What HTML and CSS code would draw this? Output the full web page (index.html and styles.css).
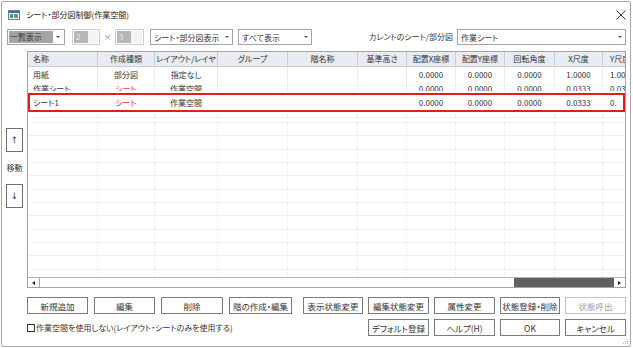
FILE: index.html
```html
<!DOCTYPE html>
<html lang="ja">
<head>
    <meta charset="UTF-8">
    <title>シート・部分図制御(作業空間)</title>
    <link rel="stylesheet" href="styles.css">
</head>
<body>
    <div class="window">
        <div class="titlebar">
            <svg class="app-icon" width="12" height="10" viewBox="0 0 12 10">
                <rect x="0.5" y="0.5" width="11" height="9" fill="#fff" stroke="#6d7b8c"/>
                <rect x="1" y="1" width="10" height="2" fill="#4a6a8e"/>
                <rect x="2" y="4" width="3" height="4" fill="#3aa55a"/>
                <rect x="6" y="4" width="4" height="4" fill="#5b8fd0"/>
            </svg>
            <span class="title">シート・部分図制御(作業空間)</span>
            <svg class="close" width="10" height="10" viewBox="0 0 10 10">
                <path d="M0.5 0.5 L9.5 9.5 M9.5 0.5 L0.5 9.5" stroke="#333" stroke-width="1"/>
            </svg>
        </div>

        <div class="toolbar">
            <div class="combo view-mode"><span class="sel">一覧表示</span><span class="arrow"></span></div>
            <div class="spin"><span class="num">2</span><span class="spin-btns"><i>˄</i><i>˅</i></span></div>
            <span class="times">×</span>
            <div class="spin wide"><span class="num">3</span><span class="spin-btns"><i>˄</i><i>˅</i></span></div>
            <div class="combo sheet-view"><span class="text">シート・部分図表示</span><span class="arrow"></span></div>
            <div class="combo all-view"><span class="text">すべて表示</span><span class="arrow"></span></div>
            <span class="spacer"></span>
            <span class="current-label">カレントのシート/部分図</span>
            <div class="combo current-sheet"><span class="text">作業シート</span><span class="arrow"></span></div>
        </div>

        <div class="main">
            <div class="mover">
                <button class="move-btn">↑</button>
                <span class="move-label">移動</span>
                <button class="move-btn">↓</button>
            </div>

            <div class="grid">
                <div class="row head">
                    <span>名称</span><span>作成種類</span><span>レイアウト/レイヤ</span><span>グループ</span><span>階名称</span><span>基準高さ</span><span>配置X座標</span><span>配置Y座標</span><span>回転角度</span><span>X尺度</span><span>Y尺度</span>
                </div>
                <div class="body">
                    <div class="row data first">
                        <span>用紙</span><span>部分図</span><span>指定なし</span><span></span><span></span><span></span><span>0.0000</span><span>0.0000</span><span>0.0000</span><span>1.0000</span><span>1.0000</span>
                    </div>
                    <div class="row data clipped">
                        <span>作業シート</span><span class="red">シート</span><span>作業空間</span><span></span><span></span><span></span><span>0.0000</span><span>0.0000</span><span>0.0000</span><span>0.0333</span><span>0.0333</span>
                    </div>
                    <div class="row data selected">
                        <span>シート1</span><span class="red">シート</span><span>作業空間</span><span></span><span></span><span></span><span>0.0000</span><span>0.0000</span><span>0.0000</span><span>0.0333</span><span>0.0333</span>
                    </div>
                    <div class="row blank thin"><span></span><span></span><span></span><span></span><span></span><span></span><span></span><span></span><span></span><span></span><span></span></div>
                    <div class="row blank thin"><span></span><span></span><span></span><span></span><span></span><span></span><span></span><span></span><span></span><span></span><span></span></div>
                    <div class="row blank"><span></span><span></span><span></span><span></span><span></span><span></span><span></span><span></span><span></span><span></span><span></span></div>
                    <div class="row blank"><span></span><span></span><span></span><span></span><span></span><span></span><span></span><span></span><span></span><span></span><span></span></div>
                    <div class="row blank"><span></span><span></span><span></span><span></span><span></span><span></span><span></span><span></span><span></span><span></span><span></span></div>
                    <div class="row blank"><span></span><span></span><span></span><span></span><span></span><span></span><span></span><span></span><span></span><span></span><span></span></div>
                    <div class="row blank"><span></span><span></span><span></span><span></span><span></span><span></span><span></span><span></span><span></span><span></span><span></span></div>
                    <div class="row blank"><span></span><span></span><span></span><span></span><span></span><span></span><span></span><span></span><span></span><span></span><span></span></div>
                    <div class="row blank"><span></span><span></span><span></span><span></span><span></span><span></span><span></span><span></span><span></span><span></span><span></span></div>
                    <div class="row blank"><span></span><span></span><span></span><span></span><span></span><span></span><span></span><span></span><span></span><span></span><span></span></div>
                    <div class="row blank"><span></span><span></span><span></span><span></span><span></span><span></span><span></span><span></span><span></span><span></span><span></span></div>
                    <div class="row blank"><span></span><span></span><span></span><span></span><span></span><span></span><span></span><span></span><span></span><span></span><span></span></div>
                    <div class="row blank"><span></span><span></span><span></span><span></span><span></span><span></span><span></span><span></span><span></span><span></span><span></span></div>
                    <div class="row blank"><span></span><span></span><span></span><span></span><span></span><span></span><span></span><span></span><span></span><span></span><span></span></div>
                </div>
                <div class="hscroll">
                    <span class="sb-arrow left"></span>
                    <span class="track"><span class="thumb"></span></span>
                    <span class="sb-arrow right"></span>
                </div>
            </div>
        </div>

        <div class="actions">
            <div class="action-row">
                <div class="group left">
                    <button class="btn">新規追加</button>
                    <button class="btn">編集</button>
                    <button class="btn w62">削除</button>
                    <button class="btn w63">階の作成・編集</button>
                </div>
                <div class="group right">
                    <button class="btn w60">表示状態変更</button>
                    <button class="btn">編集状態変更</button>
                    <button class="btn">属性変更</button>
                    <button class="btn w60">状態登録・削除</button>
                    <button class="btn disabled">状態呼出</button>
                </div>
            </div>
            <div class="action-row">
                <label class="check"><span class="box"></span>作業空間を使用しない(レイアウト・シートのみを使用する)</label>
                <div class="group right">
                    <button class="btn">デフォルト登録</button>
                    <button class="btn">ヘルプ(H)</button>
                    <button class="btn w60">OK</button>
                    <button class="btn">キャンセル</button>
                </div>
            </div>
        </div>

        <svg class="grip" width="7" height="7" viewBox="0 0 7 7">
            <rect x="5" y="1" width="1" height="1" fill="#b5b5b5"/>
            <rect x="3" y="3" width="1" height="1" fill="#b5b5b5"/>
            <rect x="5" y="3" width="1" height="1" fill="#b5b5b5"/>
            <rect x="1" y="5" width="1" height="1" fill="#b5b5b5"/>
            <rect x="3" y="5" width="1" height="1" fill="#b5b5b5"/>
            <rect x="5" y="5" width="1" height="1" fill="#b5b5b5"/>
        </svg>
    </div>
</body>
</html>
```

FILE: styles.css
```css
* { box-sizing: border-box; }
body { margin: 0; background: #fff; font-family: "Noto Sans CJK JP", "Noto Sans", sans-serif; font-size: 8px; color: #333; font-feature-settings: "palt"; }

.window { position: relative; margin: 1px 0 0 1px; width: 630px; height: 346px; border: 1px solid #a9a9a9; border-radius: 2px; background: #fff; display: flex; flex-direction: column; }

/* title */
.titlebar { height: 25px; display: flex; align-items: center; padding: 0 4px 0 6px; }
.app-icon { margin-right: 6px; }
.title { flex: 1; font-size: 8px; color: #222; }

/* toolbar */
.toolbar { margin-top: 2px; height: 16px; display: flex; padding: 0 4px 0 5px; }
.combo { display: flex; align-items: center; border: 1px solid #a3a3a3; background: #fff; padding-left: 3px; }
.combo .text { flex: 1; white-space: nowrap; }
.arrow { width: 10px; display: flex; justify-content: center; }
.arrow::after { content: ""; border-left: 2px solid transparent; border-right: 2px solid transparent; border-top: 2px solid #555; }
.view-mode { width: 58px; padding: 1px; }
.view-mode .sel { flex: 1; height: 100%; background: #a4a4a4; color: #3b3b3b; padding-left: 1px; line-height: 12px; }
.spin { display: flex; width: 28px; margin-left: 7px; border: 1px solid #cfcfcf; padding: 1px; }
.spin.wide { width: 29px; margin-left: 0; }
.spin .num { width: 14px; background: #b6b6b6; color: #e6e6e6; padding-left: 2px; line-height: 12px; }
.spin-btns { flex: 1; display: flex; flex-direction: column; align-items: center; background: #f4f4f4; color: #c4c4c4; font-size: 5px; line-height: 6px; }
.spin-btns i { font-style: normal; }
.times { width: 15px; text-align: center; color: #888; line-height: 16px; }
.sheet-view { width: 83px; margin-left: 6px; }
.all-view { width: 74px; margin-left: 5px; }
.spacer { flex: 1; }
.current-label { line-height: 16px; white-space: nowrap; }
.current-sheet { width: 169px; margin-left: 4px; }

/* main */
.main { margin-top: 6px; height: 237px; display: flex; padding-right: 4px; }
.mover { width: 25px; display: flex; flex-direction: column; align-items: center; justify-content: center; padding-bottom: 4px; }
.move-btn { width: 17px; height: 24px; padding: 0; border: 1px solid #6f6f6f; background: #fff; color: #444; font-family: "DejaVu Sans", sans-serif; font-size: 9px; }
.move-label { height: 32px; line-height: 32px; }

.grid { flex: 1; border: 1px solid #a3a3a3; display: flex; flex-direction: column; overflow: hidden; }
.row { display: flex; flex: none; }
.row > span { flex: none; white-space: nowrap; overflow: hidden; text-align: center; border-right: 1px solid #ececec; }
.row > :nth-child(1) { width: 70px; text-align: left; padding-left: 5px; }
.row > :nth-child(2) { width: 57px; }
.row > :nth-child(3) { width: 63px; }
.row > :nth-child(4) { width: 70px; }
.row > :nth-child(5) { width: 70px; }
.row > :nth-child(6) { width: 49px; }
.row > :nth-child(7) { width: 49px; }
.row > :nth-child(8) { width: 49px; }
.row > :nth-child(9) { width: 50px; }
.row > :nth-child(10) { width: 48px; }
.row > :nth-child(11) { width: 48px; text-align: left; padding-left: 7px; }

.head { height: 15px; background: #e8ebf1; border-bottom: 1px solid #c8ccd4; line-height: 14px; }
.head > span { border-right-color: #c8ccd4; }

.body { flex: 1; overflow: hidden; }
.data { line-height: 16px; }
.first { height: 16px; }
.clipped { height: 7px; margin-top: 1px; line-height: 10px; overflow: hidden; margin-bottom: 2px; }
.selected { position: relative; height: 19px; line-height: 15px; padding-top: 2px; }
.selected::after { content: ""; position: absolute; inset: 0; border: 2px solid #e31d1d; background: linear-gradient(to right, transparent calc(100% - 6px), #fff calc(100% - 6px)); background-clip: padding-box; }
.selected > span { border-right-color: transparent; }
.red { color: #ee3333; }
.blank { height: 13.33px; border-bottom: 1px solid #efefef; }
.blank.thin { height: 5.5px; }
.blank > span { border-right-color: #f2f2f2; }

.hscroll { height: 10px; flex: none; display: flex; border-top: 1px solid #b4b4b4; background: #fff; }
.sb-arrow { width: 12px; display: flex; align-items: center; justify-content: center; }
.sb-arrow.left { border-right: 1px solid #a8a8a8; }
.sb-arrow.right { width: 11px; }
.sb-arrow.left::after { content: ""; border-top: 2.5px solid transparent; border-bottom: 2.5px solid transparent; border-right: 3px solid #222; }
.sb-arrow.right::after { content: ""; border-top: 2.5px solid transparent; border-bottom: 2.5px solid transparent; border-left: 3px solid #222; }
.track { flex: 1; display: flex; justify-content: flex-end; }
.thumb { width: 100px; background: #606060; }

/* buttons */
.actions { padding: 9px 4px 0 25px; display: flex; flex-direction: column; gap: 5px; }
.action-row { display: flex; justify-content: space-between; height: 17px; }
.group { display: flex; gap: 5px; }
.group.left { gap: 6px; }
.btn { width: 61px; height: 17px; padding: 0; border: 1px solid #7b7b7b; background: #fff; color: #333; font-family: inherit; font-size: 8.5px; font-feature-settings: "palt"; white-space: nowrap; }
.btn.w60 { width: 60px; }
.btn.w62 { width: 62px; }
.btn.w63 { width: 63px; }
.btn.disabled { border-color: #c3c3c3; color: #a3a3a3; }
.check { display: flex; align-items: center; gap: 1px; }
.check .box { width: 8px; height: 8px; border: 1px solid #333; background: #fff; }

.grip { position: absolute; right: 1px; bottom: 1px; }
```
